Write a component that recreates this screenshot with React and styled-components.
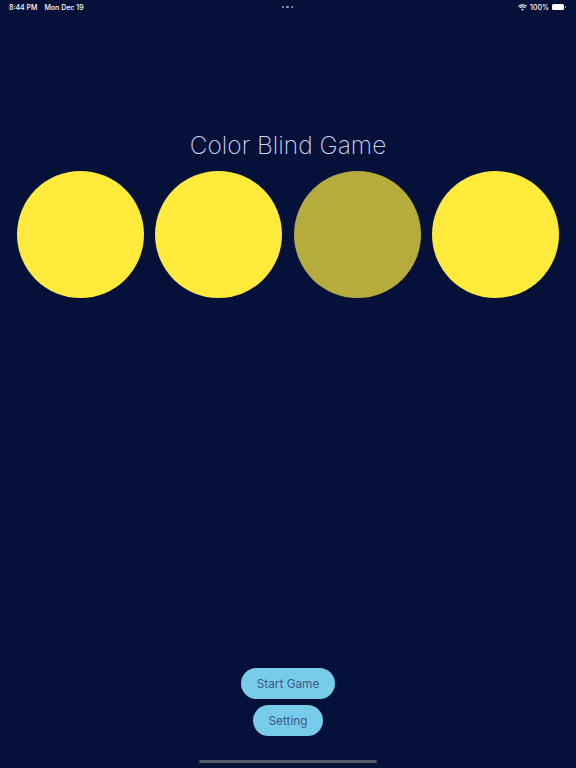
import React from "react";
import styled, { createGlobalStyle } from "styled-components";

const GlobalStyle = createGlobalStyle`
  html, body {
    margin: 0;
    padding: 0;
    background: #06113a;
  }
  * {
    box-sizing: border-box;
  }
`;

const Page = styled.div`
  display: flex;
  flex-direction: column;
  height: 768px;
  background: #06113a;
  font-family: Inter, "Liberation Sans", sans-serif;
  overflow: hidden;
`;

const StatusBar = styled.div`
  display: grid;
  grid-template-columns: 1fr auto 1fr;
  align-items: center;
  height: 14px;
  padding: 0 10px 0 9px;
  color: #ffffff;
  font-size: 7px;
  font-weight: 500;
`;

const StatusLeft = styled.div`
  display: flex;
  gap: 7px;
`;

const StatusRight = styled.div`
  display: flex;
  justify-content: flex-end;
  align-items: center;
  gap: 3px;
`;

const Dots = styled.div`
  display: flex;
  gap: 2px;
  span {
    width: 2.5px;
    height: 2.5px;
    border-radius: 50%;
    background: #9aa0b8;
  }
`;

const Battery = styled.div`
  display: flex;
  align-items: center;
  gap: 1px;
  &::before {
    content: "";
    width: 12px;
    height: 6px;
    border-radius: 1.5px;
    background: #ffffff;
  }
  &::after {
    content: "";
    width: 1px;
    height: 2.5px;
    background: #8c93a8;
  }
`;

const Title = styled.h1`
  margin: 115px 0 0;
  text-align: center;
  color: #cdd3f2;
  font-family: Inter, "Liberation Sans", sans-serif;
  font-weight: 200;
  font-size: 24.5px;
  line-height: 32px;
`;

const CircleRow = styled.div`
  display: flex;
  justify-content: space-between;
  padding: 10px 17px 0;
`;

const Circle = styled.div`
  width: 127px;
  height: 127px;
  border-radius: 50%;
  background: ${p => (p.odd ? "#b6ac3e" : "#ffeb3b")};
`;

const Spacer = styled.div`
  flex: 1;
`;

const Actions = styled.div`
  display: flex;
  flex-direction: column;
  align-items: center;
  gap: 6px;
`;

const Button = styled.button`
  height: 31px;
  padding: 0 16px;
  border: none;
  border-radius: 16px;
  background: #77cde9;
  color: #3a5888;
  font-family: Inter, "Liberation Sans", sans-serif;
  font-size: 11.8px;
`;

const HomeBar = styled.div`
  align-self: center;
  width: 178px;
  height: 3px;
  margin: 24px 0 5px;
  border-radius: 2px;
  background: #55596a;
`;

const Wifi = () => (
  <svg width="9" height="7" viewBox="0 0 18 13" fill="#fff">
    <path d="M9 13l2.6-3.1a4.2 4.2 0 0 0-5.2 0z" />
    <path d="M9 6.2c1.9 0 3.6.6 4.9 1.7l1.5-1.8A9.8 9.8 0 0 0 9 3.8a9.8 9.8 0 0 0-6.4 2.3l1.5 1.8A7.6 7.6 0 0 1 9 6.2z" />
    <path d="M9 2.4c2.9 0 5.6 1 7.6 2.8L18 3.4A13.4 13.4 0 0 0 9 0 13.4 13.4 0 0 0 0 3.4l1.4 1.8A11.3 11.3 0 0 1 9 2.4z" />
  </svg>
);

const circles = [false, false, true, false];

export default function App() {
  return (
    <>
      <GlobalStyle />
      <Page>
        <StatusBar>
          <StatusLeft>
            <span>8:44 PM</span>
            <span>Mon Dec 19</span>
          </StatusLeft>
          <Dots>
            <span />
            <span />
            <span />
          </Dots>
          <StatusRight>
            <Wifi />
            <span>100%</span>
            <Battery />
          </StatusRight>
        </StatusBar>
        <Title>Color Blind Game</Title>
        <CircleRow>
          {circles.map((odd, i) => (
            <Circle key={i} odd={odd} />
          ))}
        </CircleRow>
        <Spacer />
        <Actions>
          <Button>Start Game</Button>
          <Button>Setting</Button>
        </Actions>
        <HomeBar />
      </Page>
    </>
  );
}
